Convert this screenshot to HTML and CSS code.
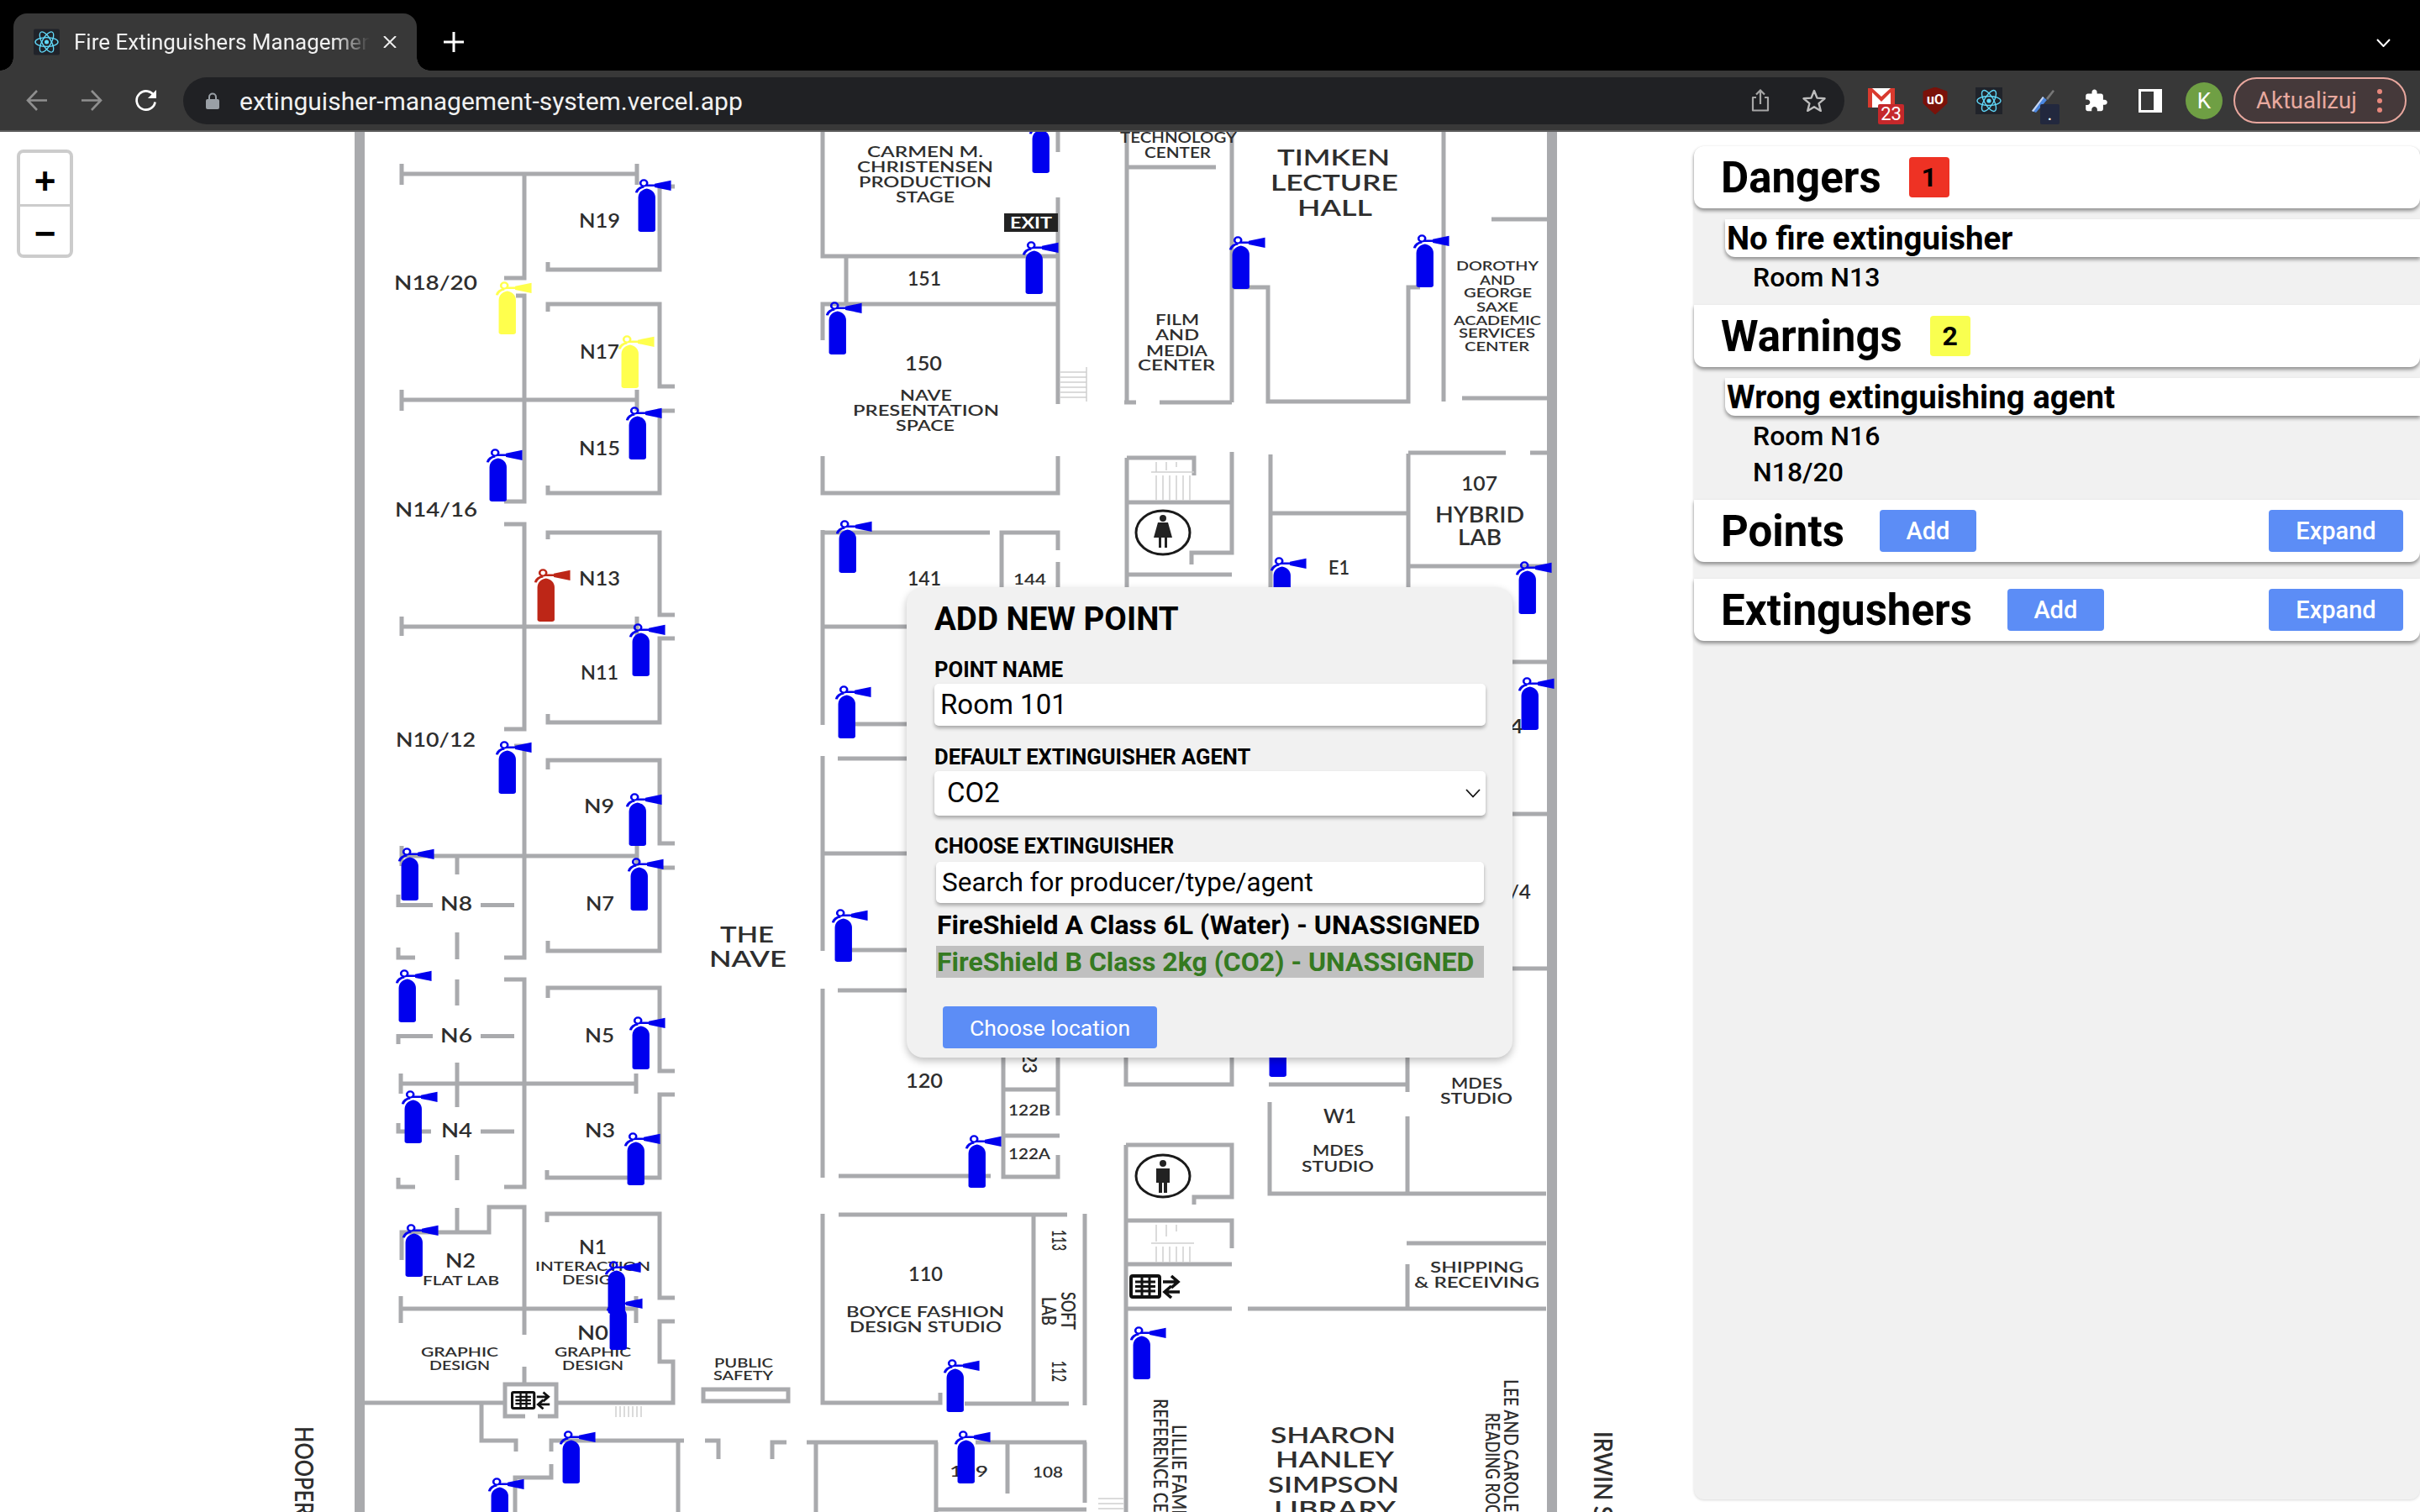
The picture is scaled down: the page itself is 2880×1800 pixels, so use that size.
FILE: index.html
```html
<!DOCTYPE html>
<html lang="en">
<head>
  <meta charset="UTF-8" />
  <meta name="viewport" content="width=device-width, initial-scale=1.0"/>
  <title>Fire Extinguishers Management</title>
  <link rel="stylesheet" href="styles.css">
</head>
<body>
  <header class="browser">
    <div class="tabstrip">
      <div class="tab">
        <svg class="favicon" viewBox="0 0 32 32">
          <rect width="32" height="32" rx="2" fill="#20232a"/>
          <g fill="none" stroke="#61dafb" stroke-width="1.4">
            <ellipse cx="16" cy="16" rx="14" ry="5.5"/>
            <ellipse cx="16" cy="16" rx="14" ry="5.5" transform="rotate(60 16 16)"/>
            <ellipse cx="16" cy="16" rx="14" ry="5.5" transform="rotate(120 16 16)"/>
          </g>
          <circle cx="16" cy="16" r="2.6" fill="#61dafb"/>
        </svg>
        <span class="tab-title">Fire Extinguishers Management</span>
        <svg class="tab-close" viewBox="0 0 16 14"><path d="M1 0L15 14M15 0L1 14" stroke="#eee" stroke-width="2"/></svg>
      </div>
      <svg class="new-tab" viewBox="0 0 24 24"><path d="M12 0V24M0 12H24" stroke="#fff" stroke-width="3"/></svg>
      <svg class="tab-list" viewBox="0 0 17 10"><path d="M1 1L8.5 9L16 1" fill="none" stroke="#fff" stroke-width="2"/></svg>
    </div>
    <div class="toolbar">
      <svg class="nav-icon back" viewBox="0 0 26 25"><path d="M25 12.5H2M13 1L2 12.5L13 24" fill="none" stroke="#8f8f8f" stroke-width="2.6"/></svg>
      <svg class="nav-icon forward" viewBox="0 0 26 25"><path d="M1 12.5H24M13 1L24 12.5L13 24" fill="none" stroke="#8f8f8f" stroke-width="2.6"/></svg>
      <svg class="nav-icon reload" viewBox="0 0 28 26"><path d="M24 8A11.5 11.5 0 1 0 25 15" fill="none" stroke="#fff" stroke-width="2.8"/><path d="M26.5 0V10.5H16z" fill="#fff"/></svg>
      <div class="omnibox">
        <svg class="lock" viewBox="0 0 16 20"><path d="M4 9V5.5a4 4 0 0 1 8 0V9" fill="none" stroke="#9aa0a6" stroke-width="2"/><rect y="8" width="16" height="12" rx="2" fill="#9aa0a6"/></svg>
        <span class="url">extinguisher-management-system.vercel.app</span>
        <svg class="share" viewBox="0 0 22 27"><path d="M6 10H2V25.5H20V10H16" fill="none" stroke="#a6a6a6" stroke-width="2.2" stroke-linejoin="round"/><path d="M11 18V2M6 6.5L11 1.5L16 6.5" fill="none" stroke="#a6a6a6" stroke-width="2.2"/></svg>
        <svg class="star" viewBox="0 0 28 27"><path d="M14 2L17.5 10.6L26.5 11.3L19.6 17.2L21.8 26L14 21.3L6.2 26L8.4 17.2L1.5 11.3L10.5 10.6z" fill="none" stroke="#bdbdbd" stroke-width="2.4" stroke-linejoin="round"/></svg>
      </div>
      <div class="extensions">
        <div class="ext">
          <svg class="ext-icon gmail" viewBox="0 0 32 23"><rect width="32" height="23" fill="#fff"/><path d="M0 0H5V23H0zM27 0H32V23H27zM0 0H5L16 10L27 0H32L16 16z" fill="#d93a2e"/></svg>
          <span class="ext-badge badge-red">23</span>
        </div>
        <div class="ext">
          <svg class="ext-icon shield" viewBox="0 0 30 32">
            <path d="M15 0L29 5V19L15 32L1 19V5z" fill="#7a120a" stroke="#7a120a" stroke-linejoin="round"/>
            <text class="shield-text" x="15" y="20" text-anchor="middle">uO</text>
          </svg>
        </div>
        <div class="ext">
          <svg class="ext-icon react" viewBox="0 0 32 32">
            <rect width="32" height="32" fill="#20232a"/>
            <g fill="none" stroke="#61dafb" stroke-width="1.4">
              <ellipse cx="16" cy="16" rx="14" ry="5.5"/>
              <ellipse cx="16" cy="16" rx="14" ry="5.5" transform="rotate(60 16 16)"/>
              <ellipse cx="16" cy="16" rx="14" ry="5.5" transform="rotate(120 16 16)"/>
            </g>
            <circle cx="16" cy="16" r="2.6" fill="#61dafb"/>
          </svg>
        </div>
        <div class="ext">
          <svg class="ext-icon dropper" viewBox="0 0 28 28">
            <path d="M1 26L14 9L19 13L6 28z" fill="#4a86e0"/>
            <path d="M1 26L14 9L15.5 10.2L3 27z" fill="#c9d6ee"/>
            <path d="M18 11L26 1L28 2.5L20 13z" fill="#777"/>
          </svg>
          <span class="ext-badge badge-navy">.</span>
        </div>
        <div class="ext">
          <svg class="ext-icon puzzle" viewBox="1 1 23 22"><path fill="#fff" d="M20.5 11H19V7c0-1.1-.9-2-2-2h-4V3.5C13 2.12 11.88 1 10.5 1S8 2.12 8 3.5V5H4c-1.1 0-1.99.9-1.99 2v3.8H3.5c1.49 0 2.7 1.21 2.7 2.7s-1.21 2.7-2.7 2.7H2V20c0 1.1.9 2 2 2h3.8v-1.5c0-1.49 1.21-2.7 2.7-2.7 1.49 0 2.7 1.21 2.7 2.7V22H17c1.1 0 2-.9 2-2v-4h1.5c1.38 0 2.5-1.12 2.5-2.5S21.88 11 20.5 11z"/></svg>
        </div>
        <div class="ext">
          <svg class="ext-icon sidebar" viewBox="0 0 28 28"><rect width="28" height="28" fill="#fff"/><rect x="3" y="3" width="15" height="22" fill="#383838"/></svg>
        </div>
        <div class="ext"><span class="avatar">K</span></div>
      </div>
      <div class="update-pill">
        <span>Aktualizuj</span>
        <span class="pill-dots"><i></i><i></i><i></i></span>
      </div>
    </div>
  </header>

  <main class="app">
    <section class="map">
      <svg class="floorplan" viewBox="0 157 2016 1643">
        <defs>
          <symbol id="extinguisher" viewBox="0 0 97 177" preserveAspectRatio="none">
            <path fill="currentColor" d="M8 170V62C8 46 18 35 31 32C44 35 54 46 54 62V170Q54 177 47 177H15Q8 177 8 170Z"/>
            <ellipse cx="23" cy="14" rx="9" ry="10" fill="none" stroke="currentColor" stroke-width="6"/>
            <path d="M3 46Q6 30 23 26M28 22L56 22" fill="none" stroke="currentColor" stroke-width="7"/>
            <path fill="currentColor" d="M52 16L96 5V39L52 28Z"/>
          </symbol>
          <symbol id="elevator" viewBox="0 0 61 29" preserveAspectRatio="none">
            <rect x="2" y="2" width="34" height="25" rx="2" fill="none" stroke="#111" stroke-width="4"/>
            <path d="M7 9H31M7 14.5H31M7 20H31M15 4V25M24 4V25" fill="none" stroke="#111" stroke-width="3"/>
            <path d="M40 9H58M50 2L58 9L50 16M60 21H42M50 14L42 21L50 28" fill="none" stroke="#111" stroke-width="3.6"/>
          </symbol>
        </defs>

        <!-- walls -->
        <path class="wall wall-outer" d="M428 157V1800M1847 157V1800"/>
        <path class="wall" d="M478 195V220M478 207H758M758 195V220M624 207V331H600M803 222H785V321H652V312M614 352H624V597H600M652 371V362H785V460H803M478 464V489M478 476H758M758 464V489M803 489H785V587H652V578M600 624H624V868H600M652 642V634H785V732H803M478 734V757M478 746H758M758 734V757M803 760H785V860H652V850M612 888H624V1140H600M652 916V905H785V1004H803M478 1007V1031M478 1019H758M758 1007V1031M544 1019V1041M474 1065V1077.5H515M572 1077.5H612M544 1110V1142M474 1128V1140H494M803 1033H785V1132H652V1120M600 1166H624V1413H600M652 1188V1176H785V1275H803M544 1166V1197M474 1243V1233.5H515M572 1233.5H612M544 1265V1318M477 1278V1302M477 1290H757M757 1278V1302M803 1303H785V1402H651V1393M474 1337V1347H513M572 1347H612M544 1375V1405M474 1402V1413H494M478 1500V1467H582V1437H624V1589M544 1438V1467M651 1455V1445H785V1545H803M477 1543V1575M477 1558H757M757 1543V1575M803 1573H785V1621H801V1670H662M624 1627V1648M625 1686H601V1648H662V1686H640M433 1670H601M573 1670V1715H614V1728M656 1728V1715H814M807 1715V1800M656 1743V1759H613V1800M839 1715H855V1737M936 1717H919V1737M960 1717H1116M971 1717V1800M1114 1717V1800M837 1654H938V1668H837Z"/>
        <path class="wall" d="M979 157V305H1259M1007 305V362M979 405V362H1259M1259 157V181M1259 235V481M979 543V587H1259V543M979 631V863M979 634H1178M1192 760V634H1259V655M1259 669V760M979 746H1100M1018 862H1100M997 903H1100M979 1016H1100M1010 1131H1100M997 1179H1100M979 900V1132M979 1177V1402M998 1400H1179M998 1446H1270M979 1445V1670H1119V1658M1148 1671H1272M1230 1446V1671M1291 1445V1673M1161 1717H1293M1199 1717V1778M1291 1717V1789M1116 1797H1293M1194 1250V1401H1259V1375M1259 1250V1328M1194 1297H1259M1194 1352H1261"/>
        <path class="wall" d="M1340 1250V1291H1466V1250M1340 1363H1466V1425H1421V1434M1340 1363V1800M1340 1453H1466V1486M1340 1505H1466M1340 1558H1466M1485 1558H1840M1341 157V479M1338 479H1352M1380 479H1466M1466 157V479M1341 199H1447M1466 342H1509V478H1676V342H1690M1718 157V478M1775 261H1842M1740 474H1842M1341 545H1421V566M1341 545V800M1341 598H1466M1466 538V658H1418V672M1341 684H1466M1512 541V720M1512 611H1676M1676 540V720M1676 539H1792M1821 539H1842M1676 674H1842M1800 788H1842M1800 969H1842M1800 1153H1842M1510 1291H1674M1675 1250V1300M1511 1312V1421H1840M1675 1329V1421M1674 1480H1840M1675 1505V1558"/>

        <!-- stairs -->
        <path class="stairs" d="M1262 443H1293M1262 449H1293M1262 455H1293M1262 461H1293M1262 467H1293M1262 473H1293M1293 437V478M1370 562H1421M1376 566V596M1384 566V596M1392 566V596M1400 566V596M1408 566V596M1416 566V596M1376 550V562M1388 550V560M1400 550V556M1370 1480H1421M1376 1484V1503M1384 1484V1503M1392 1484V1503M1400 1484V1503M1408 1484V1503M1416 1484V1503M1376 1458V1478M1388 1458V1472M1400 1458V1466M733 1674V1687M738 1674V1687M743 1674V1687M748 1674V1687M753 1674V1687M758 1674V1687M763 1674V1687M1307 1784H1337M1307 1790H1337M1307 1796H1337"/>

        <!-- restrooms and lifts -->
        <ellipse class="restroom-ring" cx="1384" cy="634" rx="32" ry="26"/>
        <path class="figure" d="M1380 617a4 4 0 1 1 8 0a4 4 0 1 1-8 0M1378 622H1390L1395 640H1389V652H1386V640H1382V652H1379V640H1373Z"/>
        <ellipse class="restroom-ring" cx="1384" cy="1400" rx="32" ry="25"/>
        <path class="figure" d="M1380 1385a4 4 0 1 1 8 0a4 4 0 1 1-8 0M1376 1391H1392V1408H1389V1420H1385V1408H1383V1420H1379V1408H1376Z"/>
        <use href="#elevator" x="608" y="1656" width="47" height="22"/>
        <use href="#elevator" x="1344" y="1517" width="61" height="29"/>
        <rect class="exit-sign" x="1195" y="254" width="64" height="22"/>
        <text class="exit-text" x="1202" y="272" textLength="50" lengthAdjust="spacingAndGlyphs">EXIT</text>

        <!-- room numbers -->
        <g class="map-text fs-22">
          <text x="689" y="271" textLength="49" lengthAdjust="spacingAndGlyphs">N19</text>
          <text x="469" y="345" textLength="99" lengthAdjust="spacingAndGlyphs">N18/20</text>
          <text x="690" y="427" textLength="47" lengthAdjust="spacingAndGlyphs">N17</text>
          <text x="689" y="542" textLength="49" lengthAdjust="spacingAndGlyphs">N15</text>
          <text x="470" y="615" textLength="98" lengthAdjust="spacingAndGlyphs">N14/16</text>
          <text x="689" y="697" textLength="49" lengthAdjust="spacingAndGlyphs">N13</text>
          <text x="691" y="809" textLength="45" lengthAdjust="spacingAndGlyphs">N11</text>
          <text x="471" y="889" textLength="95" lengthAdjust="spacingAndGlyphs">N10/12</text>
          <text x="695" y="968" textLength="36" lengthAdjust="spacingAndGlyphs">N9</text>
          <text x="524" y="1084" textLength="38" lengthAdjust="spacingAndGlyphs">N8</text>
          <text x="697" y="1084" textLength="34" lengthAdjust="spacingAndGlyphs">N7</text>
          <text x="524" y="1241" textLength="38" lengthAdjust="spacingAndGlyphs">N6</text>
          <text x="696" y="1241" textLength="35" lengthAdjust="spacingAndGlyphs">N5</text>
          <text x="525" y="1354" textLength="37" lengthAdjust="spacingAndGlyphs">N4</text>
          <text x="696" y="1354" textLength="36" lengthAdjust="spacingAndGlyphs">N3</text>
          <text x="530" y="1509" textLength="36" lengthAdjust="spacingAndGlyphs">N2</text>
          <text x="689" y="1493" textLength="33" lengthAdjust="spacingAndGlyphs">N1</text>
          <text x="687" y="1595" textLength="37" lengthAdjust="spacingAndGlyphs">N0</text>
          <text x="1080" y="340" textLength="40" lengthAdjust="spacingAndGlyphs">151</text>
          <text x="1077" y="441" textLength="44" lengthAdjust="spacingAndGlyphs">150</text>
          <text x="1080" y="697" textLength="40" lengthAdjust="spacingAndGlyphs">141</text>
          <text x="1739" y="584" textLength="43" lengthAdjust="spacingAndGlyphs">107</text>
          <text x="1581" y="684" textLength="25" lengthAdjust="spacingAndGlyphs">E1</text>
          <text x="1078" y="1295" textLength="44" lengthAdjust="spacingAndGlyphs">120</text>
          <text x="1081" y="1525" textLength="41" lengthAdjust="spacingAndGlyphs">110</text>
          <text x="1575" y="1337" textLength="39" lengthAdjust="spacingAndGlyphs">W1</text>
          <text x="1780" y="873" textLength="33" lengthAdjust="spacingAndGlyphs">14</text>
          <text x="1778" y="1070" textLength="44" lengthAdjust="spacingAndGlyphs">N/4</text>
        </g>

        <!-- small captions -->
        <g class="map-text fs-17">
          <text x="1032" y="187" textLength="138" lengthAdjust="spacingAndGlyphs">CARMEN M.</text>
          <text x="1020" y="205" textLength="162" lengthAdjust="spacingAndGlyphs">CHRISTENSEN</text>
          <text x="1022" y="223" textLength="158" lengthAdjust="spacingAndGlyphs">PRODUCTION</text>
          <text x="1066" y="241" textLength="70" lengthAdjust="spacingAndGlyphs">STAGE</text>
          <text x="1071" y="477" textLength="62" lengthAdjust="spacingAndGlyphs">NAVE</text>
          <text x="1015" y="495" textLength="174" lengthAdjust="spacingAndGlyphs">PRESENTATION</text>
          <text x="1066" y="513" textLength="70" lengthAdjust="spacingAndGlyphs">SPACE</text>
          <text x="1333" y="170" textLength="139" lengthAdjust="spacingAndGlyphs">TECHNOLOGY</text>
          <text x="1362" y="188" textLength="79" lengthAdjust="spacingAndGlyphs">CENTER</text>
          <text x="1375" y="387" textLength="52" lengthAdjust="spacingAndGlyphs">FILM</text>
          <text x="1375" y="405" textLength="52" lengthAdjust="spacingAndGlyphs">AND</text>
          <text x="1364" y="424" textLength="73" lengthAdjust="spacingAndGlyphs">MEDIA</text>
          <text x="1354" y="441" textLength="92" lengthAdjust="spacingAndGlyphs">CENTER</text>
          <text x="1206" y="696" textLength="39" lengthAdjust="spacingAndGlyphs">144</text>
          <text x="1007" y="1568" textLength="188" lengthAdjust="spacingAndGlyphs">BOYCE FASHION</text>
          <text x="1011" y="1586" textLength="181" lengthAdjust="spacingAndGlyphs">DESIGN STUDIO</text>
          <text x="1200" y="1328" textLength="50" lengthAdjust="spacingAndGlyphs">122B</text>
          <text x="1200" y="1380" textLength="50" lengthAdjust="spacingAndGlyphs">122A</text>
          <text x="1727" y="1296" textLength="61" lengthAdjust="spacingAndGlyphs">MDES</text>
          <text x="1714" y="1314" textLength="86" lengthAdjust="spacingAndGlyphs">STUDIO</text>
          <text x="1562" y="1376" textLength="61" lengthAdjust="spacingAndGlyphs">MDES</text>
          <text x="1549" y="1395" textLength="86" lengthAdjust="spacingAndGlyphs">STUDIO</text>
          <text x="1702" y="1515" textLength="111" lengthAdjust="spacingAndGlyphs">SHIPPING</text>
          <text x="1683" y="1533" textLength="149" lengthAdjust="spacingAndGlyphs">&amp; RECEIVING</text>
          <text x="1130" y="1758" textLength="46" lengthAdjust="spacingAndGlyphs">109</text>
          <text x="1229" y="1759" textLength="36" lengthAdjust="spacingAndGlyphs">108</text>
        </g>

        <g class="map-text fs-15">
          <text x="1733" y="322" textLength="98" lengthAdjust="spacingAndGlyphs">DOROTHY</text>
          <text x="1761" y="339" textLength="42" lengthAdjust="spacingAndGlyphs">AND</text>
          <text x="1742" y="354" textLength="81" lengthAdjust="spacingAndGlyphs">GEORGE</text>
          <text x="1757" y="371" textLength="50" lengthAdjust="spacingAndGlyphs">SAXE</text>
          <text x="1730" y="387" textLength="104" lengthAdjust="spacingAndGlyphs">ACADEMIC</text>
          <text x="1736" y="402" textLength="91" lengthAdjust="spacingAndGlyphs">SERVICES</text>
          <text x="1743" y="418" textLength="77" lengthAdjust="spacingAndGlyphs">CENTER</text>
          <text x="503" y="1530" textLength="91" lengthAdjust="spacingAndGlyphs">FLAT LAB</text>
          <text x="637" y="1513" textLength="137" lengthAdjust="spacingAndGlyphs">INTERACTION</text>
          <text x="669" y="1529" textLength="74" lengthAdjust="spacingAndGlyphs">DESIGN</text>
          <text x="660" y="1615" textLength="91" lengthAdjust="spacingAndGlyphs">GRAPHIC</text>
          <text x="669" y="1631" textLength="73" lengthAdjust="spacingAndGlyphs">DESIGN</text>
          <text x="501" y="1615" textLength="92" lengthAdjust="spacingAndGlyphs">GRAPHIC</text>
          <text x="511" y="1631" textLength="72" lengthAdjust="spacingAndGlyphs">DESIGN</text>
          <text x="850" y="1628" textLength="70" lengthAdjust="spacingAndGlyphs">PUBLIC</text>
          <text x="849" y="1643" textLength="71" lengthAdjust="spacingAndGlyphs">SAFETY</text>
        </g>

        <!-- big captions -->
        <g class="map-text fs-27">
          <text x="857" y="1122" textLength="64" lengthAdjust="spacingAndGlyphs">THE</text>
          <text x="844" y="1151" textLength="92" lengthAdjust="spacingAndGlyphs">NAVE</text>
          <text x="1520" y="197" textLength="134" lengthAdjust="spacingAndGlyphs">TIMKEN</text>
          <text x="1512" y="227" textLength="152" lengthAdjust="spacingAndGlyphs">LECTURE</text>
          <text x="1544" y="257" textLength="89" lengthAdjust="spacingAndGlyphs">HALL</text>
          <text x="1708" y="622" textLength="106" lengthAdjust="spacingAndGlyphs">HYBRID</text>
          <text x="1735" y="649" textLength="52" lengthAdjust="spacingAndGlyphs">LAB</text>
          <text x="1512" y="1718" textLength="149" lengthAdjust="spacingAndGlyphs">SHARON</text>
          <text x="1518" y="1747" textLength="141" lengthAdjust="spacingAndGlyphs">HANLEY</text>
          <text x="1509" y="1777" textLength="156" lengthAdjust="spacingAndGlyphs">SIMPSON</text>
          <text x="1516" y="1806" textLength="145" lengthAdjust="spacingAndGlyphs">LIBRARY</text>
        </g>

        <!-- rotated captions -->
        <g class="map-text fs-22">
          <text transform="translate(1217 1240) rotate(90)" textLength="38" lengthAdjust="spacingAndGlyphs">123</text>
          <text transform="translate(1252 1464) rotate(90)" textLength="25" lengthAdjust="spacingAndGlyphs">113</text>
          <text transform="translate(1252 1620) rotate(90)" textLength="25" lengthAdjust="spacingAndGlyphs">112</text>
          <text transform="translate(1263 1538) rotate(90)" textLength="45" lengthAdjust="spacingAndGlyphs">SOFT</text>
          <text transform="translate(1240 1544) rotate(90)" textLength="34" lengthAdjust="spacingAndGlyphs">LAB</text>
          <text transform="translate(1373 1665) rotate(90)" textLength="185" lengthAdjust="spacingAndGlyphs">REFERENCE CENTER</text>
          <text transform="translate(1395 1696) rotate(90)" textLength="128" lengthAdjust="spacingAndGlyphs">LILLIE FAMILY</text>
          <text transform="translate(1790 1642) rotate(90)" textLength="158" lengthAdjust="spacingAndGlyphs">LEE AND CAROLE</text>
          <text transform="translate(1768 1682) rotate(90)" textLength="140" lengthAdjust="spacingAndGlyphs">READING ROOM</text>
        </g>
        <g class="map-text fs-30">
          <text transform="translate(351 1698) rotate(90)" textLength="106" lengthAdjust="spacingAndGlyphs">HOOPER</text>
          <text transform="translate(1897 1704) rotate(90)" textLength="120" lengthAdjust="spacingAndGlyphs">IRWIN ST</text>
        </g>

        <!-- extinguisher markers -->
        <g class="pin-blue">
          <use href="#extinguisher" x="756" y="213" width="43" height="63"/>
          <use href="#extinguisher" x="745" y="484" width="43" height="63"/>
          <use href="#extinguisher" x="579" y="534" width="43" height="63"/>
          <use href="#extinguisher" x="983" y="359" width="43" height="63"/>
          <use href="#extinguisher" x="995" y="619" width="43" height="63"/>
          <use href="#extinguisher" x="749" y="742" width="43" height="63"/>
          <use href="#extinguisher" x="590" y="882" width="43" height="63"/>
          <use href="#extinguisher" x="745" y="944" width="43" height="63"/>
          <use href="#extinguisher" x="474" y="1009" width="43" height="63"/>
          <use href="#extinguisher" x="747" y="1021" width="43" height="63"/>
          <use href="#extinguisher" x="749" y="1210" width="43" height="63"/>
          <use href="#extinguisher" x="471" y="1154" width="43" height="63"/>
          <use href="#extinguisher" x="994" y="816" width="43" height="63"/>
          <use href="#extinguisher" x="990" y="1082" width="43" height="63"/>
          <use href="#extinguisher" x="478" y="1298" width="43" height="63"/>
          <use href="#extinguisher" x="743" y="1348" width="43" height="63"/>
          <use href="#extinguisher" x="479" y="1457" width="43" height="63"/>
          <use href="#extinguisher" x="722" y="1544" width="43" height="63"/>
          <use href="#extinguisher" x="720" y="1501" width="43" height="63"/>
          <use href="#extinguisher" x="666" y="1703" width="43" height="63"/>
          <use href="#extinguisher" x="581" y="1759" width="43" height="63"/>
          <use href="#extinguisher" x="1217" y="287" width="43" height="63"/>
          <use href="#extinguisher" x="1463" y="281" width="43" height="63"/>
          <use href="#extinguisher" x="1682" y="279" width="43" height="63"/>
          <use href="#extinguisher" x="1225" y="143" width="43" height="63"/>
          <use href="#extinguisher" x="1512" y="663" width="43" height="63"/>
          <use href="#extinguisher" x="1804" y="668" width="43" height="63"/>
          <use href="#extinguisher" x="1807" y="806" width="43" height="63"/>
          <use href="#extinguisher" x="1507" y="1219" width="43" height="63"/>
          <use href="#extinguisher" x="1149" y="1351" width="43" height="63"/>
          <use href="#extinguisher" x="1123" y="1618" width="43" height="63"/>
          <use href="#extinguisher" x="1136" y="1703" width="43" height="63"/>
          <use href="#extinguisher" x="1345" y="1579" width="43" height="63"/>
        </g>
        <g class="pin-yellow">
          <use href="#extinguisher" x="590" y="335" width="43" height="63"/>
          <use href="#extinguisher" x="736" y="399" width="43" height="63"/>
        </g>
        <g class="pin-red">
          <use href="#extinguisher" x="636" y="677" width="43" height="63"/>
        </g>
      </svg>

      <div class="zoom-control">
        <button class="zoom-btn">+</button>
        <button class="zoom-btn">−</button>
      </div>

      <form class="add-point">
        <h3>ADD NEW POINT</h3>
        <label for="pointName">POINT NAME</label>
        <input class="field" id="pointName" type="text" value="Room 101" />
        <label class="label-gap" for="agent">DEFAULT EXTINGUISHER AGENT</label>
        <div class="select-wrap">
          <select class="field field-select" id="agent">
            <option>CO2</option>
            <option>Water</option>
            <option>Foam</option>
          </select>
          <svg class="select-arrow" viewBox="0 0 18 11"><path d="M1 1L9 9.5L17 1" fill="none" stroke="#111" stroke-width="1.8"/></svg>
        </div>
        <label class="label-gap" for="search">CHOOSE EXTINGUISHER</label>
        <input class="field field-search" id="search" type="text" value="Search for producer/type/agent" />
        <ul class="ext-list">
          <li>FireShield A Class 6L (Water) - UNASSIGNED</li>
          <li class="selected">FireShield B Class 2kg (CO2) - UNASSIGNED</li>
        </ul>
        <button class="btn btn-location" type="button">Choose location</button>
      </form>
    </section>

    <aside class="panel">
      <div class="panel-head panel-head-first">
        <h2>Dangers</h2>
        <span class="count count-red">1</span>
      </div>
      <h4 class="sub-head">No fire extinguisher</h4>
      <ul class="room-list">
        <li>Room N13</li>
      </ul>
      <div class="panel-head">
        <h2>Warnings</h2>
        <span class="count count-yellow">2</span>
      </div>
      <h4 class="sub-head">Wrong extinguishing agent</h4>
      <ul class="room-list">
        <li>Room N16</li>
        <li>N18/20</li>
      </ul>
      <div class="panel-head">
        <h2>Points</h2>
        <button class="btn btn-add">Add</button>
        <button class="btn btn-expand">Expand</button>
      </div>
      <div class="panel-head panel-head-gap">
        <h2>Extingushers</h2>
        <button class="btn btn-add">Add</button>
        <button class="btn btn-expand">Expand</button>
      </div>
    </aside>
  </main>
</body>
</html>
```

FILE: styles.css
```css
* {
  box-sizing: border-box;
}

body {
  margin: 0;
  width: 2880px;
  height: 1800px;
  overflow: hidden;
  background: #fff;
  color: #000;
  font-family: Roboto, sans-serif;
}

/* browser chrome */
.browser {
  height: 157px;
}

.tabstrip {
  display: flex;
  align-items: flex-end;
  height: 84px;
  padding-left: 16px;
  background: #000;
}

.tab {
  position: relative;
  display: flex;
  align-items: center;
  width: 480px;
  height: 68px;
  padding-left: 24px;
  background: #383838;
  border-radius: 16px 16px 0 0;
}

.tab::before,
.tab::after {
  content: '';
  position: absolute;
  bottom: 0;
  width: 16px;
  height: 16px;
}

.tab::before {
  left: -16px;
  background: radial-gradient(circle at 0 0, transparent 15.5px, #383838 16px);
}

.tab::after {
  right: -16px;
  background: radial-gradient(circle at 100% 0, transparent 15.5px, #383838 16px);
}

.favicon {
  width: 31px;
  height: 32px;
  flex: none;
}

.tab-title {
  width: 352px;
  margin-left: 17px;
  overflow: hidden;
  white-space: nowrap;
  font-size: 26px;
  color: #f0f0f0;
  -webkit-mask-image: linear-gradient(90deg, #000 88%, transparent 100%);
}

.tab-close {
  width: 16px;
  height: 14px;
  margin-left: 16px;
}

.new-tab {
  width: 24px;
  height: 24px;
  margin: 0 0 22px 32px;
}

.tab-list {
  width: 17px;
  height: 10px;
  margin: 0 35px 28px auto;
}

.toolbar {
  display: flex;
  align-items: center;
  height: 73px;
  background: #383838;
  border-bottom: 2px solid #5c5c5c;
}

.nav-icon {
  height: 25px;
  flex: none;
}

.back {
  width: 26px;
  margin-left: 31px;
}

.forward {
  width: 26px;
  margin-left: 39px;
}

.reload {
  width: 28px;
  margin-left: 38px;
}

.omnibox {
  display: flex;
  align-items: center;
  width: 1977px;
  height: 56px;
  margin-left: 30px;
  padding-left: 27px;
  background: #202124;
  border-radius: 28px;
}

.lock {
  width: 16px;
  height: 20px;
}

.url {
  margin: 2px 0 0 24px;
  font-size: 30px;
  color: #f1f1f1;
}

.share {
  width: 22px;
  height: 27px;
  margin-left: auto;
}

.star {
  width: 28px;
  height: 27px;
  margin: 0 22px 0 39px;
}

.extensions {
  display: flex;
  margin-left: 12px;
}

.ext {
  position: relative;
  display: flex;
  align-items: center;
  justify-content: center;
  width: 64px;
  height: 56px;
}

.ext-icon {
  display: block;
}

.gmail {
  width: 32px;
  height: 23px;
  margin-top: -6px;
}

.shield,
.react {
  width: 32px;
  height: 32px;
}

.shield-text {
  font: 700 16px Roboto, sans-serif;
  fill: #fff;
}

.dropper {
  width: 28px;
  height: 28px;
}

.puzzle,
.sidebar {
  width: 28px;
  height: 28px;
}

.ext-badge {
  position: absolute;
  top: 32px;
  display: flex;
  align-items: center;
  justify-content: center;
  height: 24px;
  border-radius: 2px;
  font-size: 22px;
  color: #fff;
}

.badge-red {
  left: 28px;
  width: 31px;
  background: #c5282b;
}

.badge-navy {
  left: 29px;
  width: 23px;
  background: #22283e;
}

.avatar {
  display: flex;
  align-items: center;
  justify-content: center;
  width: 44px;
  height: 44px;
  border-radius: 50%;
  background: #6f9f44;
  font-size: 26px;
  color: #fff;
}

.update-pill {
  display: flex;
  align-items: center;
  width: 206px;
  height: 55px;
  margin-left: 3px;
  padding-left: 25px;
  background: #45393a;
  border: 2px solid #e8a79e;
  border-radius: 28px;
  font-size: 27.5px;
  color: #e8a99f;
}

.pill-dots {
  display: flex;
  flex-direction: column;
  gap: 5px;
  margin-left: 24px;
}

.pill-dots i {
  width: 6px;
  height: 6px;
  border-radius: 50%;
  background: #e8877c;
}

/* main layout */
.app {
  display: grid;
  grid-template-columns: 2016px 1fr;
  height: 1643px;
}

.map {
  position: relative;
  overflow: hidden;
}

.floorplan {
  display: block;
  width: 2016px;
  height: 1643px;
}

.wall {
  fill: none;
  stroke: #a9aaad;
  stroke-width: 5px;
}

.wall-outer {
  stroke-width: 12px;
}

.stairs {
  fill: none;
  stroke: #cfcfcf;
  stroke-width: 1.5px;
}

.restroom-ring {
  fill: none;
  stroke: #1a1a1a;
  stroke-width: 3px;
}

.figure {
  fill: #222;
}

.exit-sign {
  fill: #222;
}

.exit-text {
  font: 700 19px Lato, sans-serif;
  fill: #fff;
}

.map-text {
  font-family: Lato, sans-serif;
  font-weight: 600;
  fill: #2e2e2e;
}

.fs-15 { font-size: 15px; }
.fs-17 { font-size: 17px; }
.fs-22 { font-size: 22px; }
.fs-27 { font-size: 27px; }
.fs-30 { font-size: 30px; }

.pin-blue { color: #0000ee; }
.pin-yellow { color: #ffff4d; }
.pin-red { color: #bd2617; }

/* leaflet zoom buttons */
.zoom-control {
  position: absolute;
  left: 20px;
  top: 21px;
  width: 67px;
  height: 129px;
  background: #fff;
  border: 4px solid #ccc;
  border-radius: 8px;
}

.zoom-btn {
  display: block;
  width: 100%;
  height: 60.5px;
  padding: 7px 0 0;
  background: none;
  border: 0;
  font: 700 44px 'Liberation Sans', sans-serif;
  color: #000;
}

.zoom-btn + .zoom-btn {
  border-top: 3px solid #ccc;
}

/* add point dialog */
.add-point {
  position: absolute;
  left: 1079px;
  top: 542px;
  width: 721px;
  height: 560px;
  padding: 16px 32px 0 33px;
  background: #f1f1f1;
  border-radius: 20px;
  box-shadow: 0 4px 10px rgba(0, 0, 0, 0.25);
}

.add-point h3 {
  margin: 0 0 23px;
  font-size: 38.5px;
  line-height: 44px;
  font-weight: 700;
}

.add-point label {
  display: block;
  margin-bottom: 2px;
  font-size: 25.6px;
  line-height: 30px;
  font-weight: 700;
}

.add-point .label-gap {
  margin-top: 21.5px;
}

.field {
  display: block;
  width: 100%;
  height: 50px;
  padding: 0 7px 2px;
  background: #fff;
  border: 0;
  border-radius: 5px;
  box-shadow: 0 3px 4px rgba(0, 0, 0, 0.3);
  font: 400 33px Roboto, sans-serif;
  color: #000;
}

.select-wrap {
  position: relative;
}

.field-select {
  height: 53px;
  padding-left: 15px;
  appearance: none;
}

.select-arrow {
  position: absolute;
  right: 6px;
  top: 21px;
  width: 18px;
  height: 11px;
}

.field-search {
  width: calc(100% - 4px);
  height: 49px;
  margin: 4px 2px 0;
  padding-bottom: 0;
  font-size: 31.5px;
}

.ext-list {
  margin: 7px 2px 0;
  padding: 0;
  list-style: none;
}

.ext-list li {
  height: 38px;
  padding-left: 1px;
  font-size: 32px;
  line-height: 38px;
  font-weight: 700;
  white-space: nowrap;
}

.ext-list .selected {
  margin-top: 6px;
  background: #c0c0c0;
  color: #357a21;
}

.btn {
  height: 50px;
  padding: 0;
  background: #5c8df6;
  border: 0;
  border-radius: 4px;
  font: 500 29px Roboto, sans-serif;
  color: #fff;
}

.btn-location {
  display: block;
  width: 255px;
  margin: 34px 0 0 10px;
  font-size: 26.5px;
  font-weight: 400;
}

/* right panel */
.panel {
  height: 1611px;
  margin-top: 17px;
  background: #f1f1f1;
  border-radius: 12px;
  box-shadow: 0 1px 3px rgba(0, 0, 0, 0.15);
}

.panel-head {
  display: flex;
  align-items: center;
  height: 74px;
  padding: 0 20px 0 32px;
  background: #fff;
  border-radius: 0 0 12px 12px;
  box-shadow: 0 3px 4px rgba(0, 0, 0, 0.4);
}

.panel-head-first {
  border-radius: 12px;
}

.panel-head-gap {
  margin-top: 20px;
}

.panel-head h2 {
  margin: 0;
  font-size: 51px;
  font-weight: 700;
}

.count {
  display: flex;
  align-items: center;
  justify-content: center;
  width: 48px;
  height: 48px;
  margin-left: 33px;
  border-radius: 4px;
  font-size: 32px;
  font-weight: 700;
}

.count-red {
  background: #ee3224;
}

.count-yellow {
  background: #f9ff50;
}

.btn-add {
  width: 115px;
  margin-left: 42px;
}

.btn-expand {
  width: 160px;
  margin-left: auto;
}

.sub-head {
  height: 45px;
  margin: 13px 0 0 37px;
  padding-left: 2px;
  background: #fff;
  border-radius: 0 0 0 12px;
  box-shadow: 0 3px 4px rgba(0, 0, 0, 0.4);
  font-size: 38.4px;
  line-height: 45px;
  font-weight: 700;
}

.room-list {
  margin: 3px 0 11px;
  padding: 0 0 0 70px;
  list-style: none;
}

.room-list li {
  font-size: 32px;
  line-height: 43px;
  font-weight: 500;
}
```
